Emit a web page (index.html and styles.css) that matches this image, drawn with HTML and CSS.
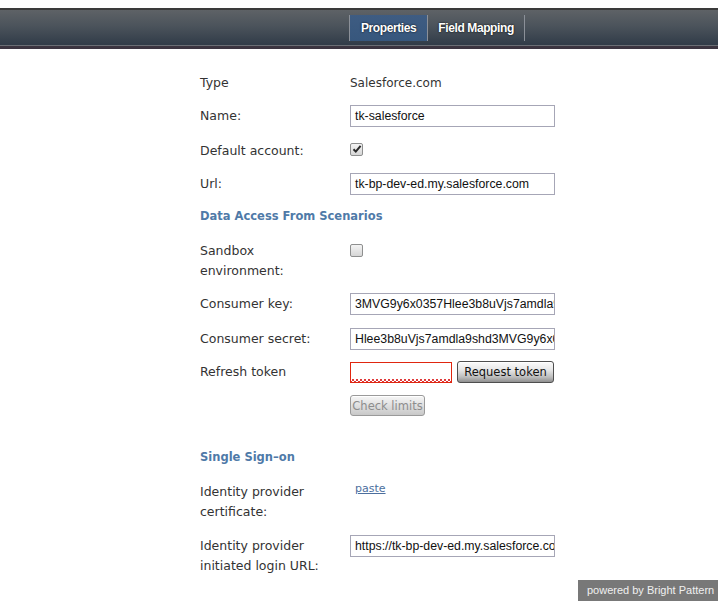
FILE: index.html
```html
<!DOCTYPE html>
<html>
<head>
<meta charset="utf-8">
<link rel="stylesheet" href="styles.css">
</head>
<body>
<div class="topbar">
  <div class="tabs">
    <div class="tab active">Properties</div>
    <div class="tab">Field Mapping</div>
  </div>
</div>

<div class="form">
  <div class="row r-text">
    <div class="label">Type</div>
    <div class="value">Salesforce.com</div>
  </div>
  <div class="row">
    <div class="label">Name:</div>
    <div class="field"><div class="input">tk-salesforce</div></div>
  </div>
  <div class="row r-check">
    <div class="label">Default account:</div>
    <div class="field"><span class="checkbox checked"><svg viewBox="0 0 12 12" width="12" height="12"><path d="M2.5 6.2 L4.8 8.6 L9.6 2.8" fill="none" stroke="#2a2a2a" stroke-width="2"/></svg></span></div>
  </div>
  <div class="row">
    <div class="label">Url:</div>
    <div class="field"><div class="input">tk-bp-dev-ed.my.salesforce.com</div></div>
  </div>
  <div class="heading">Data Access From Scenarios</div>
  <div class="row r-top r-sandbox">
    <div class="label">Sandbox<br>environment:</div>
    <div class="field"><span class="checkbox"></span></div>
  </div>
  <div class="row r-key">
    <div class="label">Consumer key:</div>
    <div class="field"><div class="input">3MVG9y6x0357Hlee3b8uVjs7amdla9shd</div></div>
  </div>
  <div class="row r-secret">
    <div class="label">Consumer secret:</div>
    <div class="field"><div class="input">Hlee3b8uVjs7amdla9shd3MVG9y6x0357</div></div>
  </div>
  <div class="row">
    <div class="label">Refresh token</div>
    <div class="field token">
      <div class="input invalid"><span class="squiggle"></span></div>
      <button class="btn">Request token</button>
    </div>
  </div>
  <div class="row r-btn">
    <div class="label"></div>
    <div class="field"><button class="btn disabled">Check limits</button></div>
  </div>
  <div class="heading sso">Single Sign–on</div>
  <div class="row r-top r-cert">
    <div class="label">Identity provider<br>certificate:</div>
    <div class="field"><a class="link">paste</a></div>
  </div>
  <div class="row r-top">
    <div class="label">Identity provider<br>initiated login URL:</div>
    <div class="field"><div class="input">https://tk-bp-dev-ed.my.salesforce.com</div></div>
  </div>
</div>

<div class="powered">powered by Bright Pattern</div>
</body>
</html>
```

FILE: styles.css
```css
html, body {
  margin: 0;
  padding: 0;
  background: #ffffff;
}
body {
  font-family: "DejaVu Sans", Verdana, sans-serif;
  color: #333333;
  width: 718px;
  height: 601px;
  overflow: hidden;
}

.topbar {
  margin-top: 8px;
  height: 41px;
  box-sizing: border-box;
  border-top: 2px solid #3a3a3a;
  border-bottom: 3px solid #3b3440;
  background: linear-gradient(#5e6266 0%, #4b535b 45%, #2f3a47 100%);
  box-shadow: inset 0 -1px 0 #6a6e74;
  display: flex;
  justify-content: flex-start;
  padding-left: 349px;
}
.tabs {
  display: flex;
  height: 26px;
  margin-top: 5px;
  border-left: 1px solid #8b9098;
}
.tab {
  height: 26px;
  padding: 0 10px;
  display: flex;
  align-items: center;
  border-right: 1px solid #8b9098;
  font-family: "Liberation Sans", Arial, sans-serif;
  font-weight: bold;
  font-size: 12px;
  letter-spacing: -0.4px;
  color: #ffffff;
  text-shadow: 0 0 2px #000000;
}
.tab.active {
  background: linear-gradient(#3e5c82, #37577d);
  padding: 0 11px;
}

.form {
  display: flex;
  flex-direction: column;
  align-items: flex-start;
  padding-left: 200px;
  padding-top: 24px;
}
.row {
  display: grid;
  grid-template-columns: 150px 205px;
  align-items: center;
  margin-bottom: 12px;
}
.row.r-top {
  align-items: start;
}
.label {
  font-size: 12.5px;
  line-height: 20px;
  color: #333333;
}
.value {
  font-size: 12px;
  line-height: 20px;
  color: #333333;
}
.r-check { margin-top: 2px; margin-bottom: 12px; }
.r-key { margin-bottom: 13px; }
.r-secret { margin-bottom: 11px; }
.r-btn { margin-bottom: 32px; }
.r-cert { margin-bottom: 14px; }

.field {
  display: flex;
  align-items: center;
}
.input {
  width: 205px;
  height: 22px;
  box-sizing: border-box;
  border: 1px solid #a6a6b6;
  background: #ffffff;
  padding: 0 4px;
  font-family: "Liberation Sans", Arial, sans-serif;
  font-size: 12.3px;
  line-height: 20px;
  color: #111111;
  white-space: nowrap;
  overflow: hidden;
}
.r-top .input { margin-top: -1px; }

.token { gap: 5px; }
.input.invalid {
  width: 102px;
  height: 21px;
  border: 1px solid #e0260f;
  position: relative;
}
.squiggle {
  position: absolute;
  left: 0;
  right: 0;
  bottom: 0;
  height: 3px;
  background-image:
    linear-gradient(45deg, transparent 45%, #e03a3a 45%, #e03a3a 65%, transparent 65%),
    linear-gradient(-45deg, transparent 45%, #e03a3a 45%, #e03a3a 65%, transparent 65%);
  background-size: 4px 3px;
  background-repeat: repeat-x;
}

.checkbox {
  display: inline-block;
  width: 11px;
  height: 11px;
  margin-top: -4px;
  border: 1px solid #8e8f8f;
  border-radius: 2px;
  background: linear-gradient(#f4f4f4, #d6d6d6);
  position: relative;
}
.checkbox svg {
  position: absolute;
  left: 0;
  top: -1px;
}
.r-sandbox .checkbox { margin-top: 3px; }

.btn {
  height: 22px;
  box-sizing: border-box;
  border: 1px solid #4e4e4e;
  border-radius: 3px;
  background: linear-gradient(#fbfbfb 0%, #e6e6e6 40%, #bdbdbd 75%, #8f8f8f 100%);
  font-family: "DejaVu Sans", Verdana, sans-serif;
  font-size: 11.5px;
  color: #111111;
  padding: 0 10px;
  margin: 0;
  box-shadow: inset 0 1px 0 #ffffff;
}
.token .btn { width: 97px; padding: 0; }
.btn.disabled {
  height: 21px;
  width: 75px;
  padding: 0;
  border-color: #9a9a9a;
  color: #8d8d8d;
  background: linear-gradient(#f6f6f6 0%, #e2e2e2 45%, #c8c8c8 100%);
}

.heading {
  font-weight: bold;
  font-size: 11.5px;
  line-height: 20px;
  color: #4f7aa8;
  margin-top: -1px;
  margin-bottom: 15px;
}

.link {
  font-size: 11px;
  color: #4c6f9e;
  text-decoration: underline;
  margin-left: 5px;
  line-height: 14px;
  cursor: pointer;
}

.powered {
  position: fixed;
  right: 0;
  bottom: 0;
  width: 140px;
  height: 21px;
  box-sizing: border-box;
  padding-left: 9px;
  background: #787878;
  color: #f0f0f0;
  font-family: "Liberation Sans", Arial, sans-serif;
  font-size: 11px;
  line-height: 21px;
  white-space: nowrap;
}
```
